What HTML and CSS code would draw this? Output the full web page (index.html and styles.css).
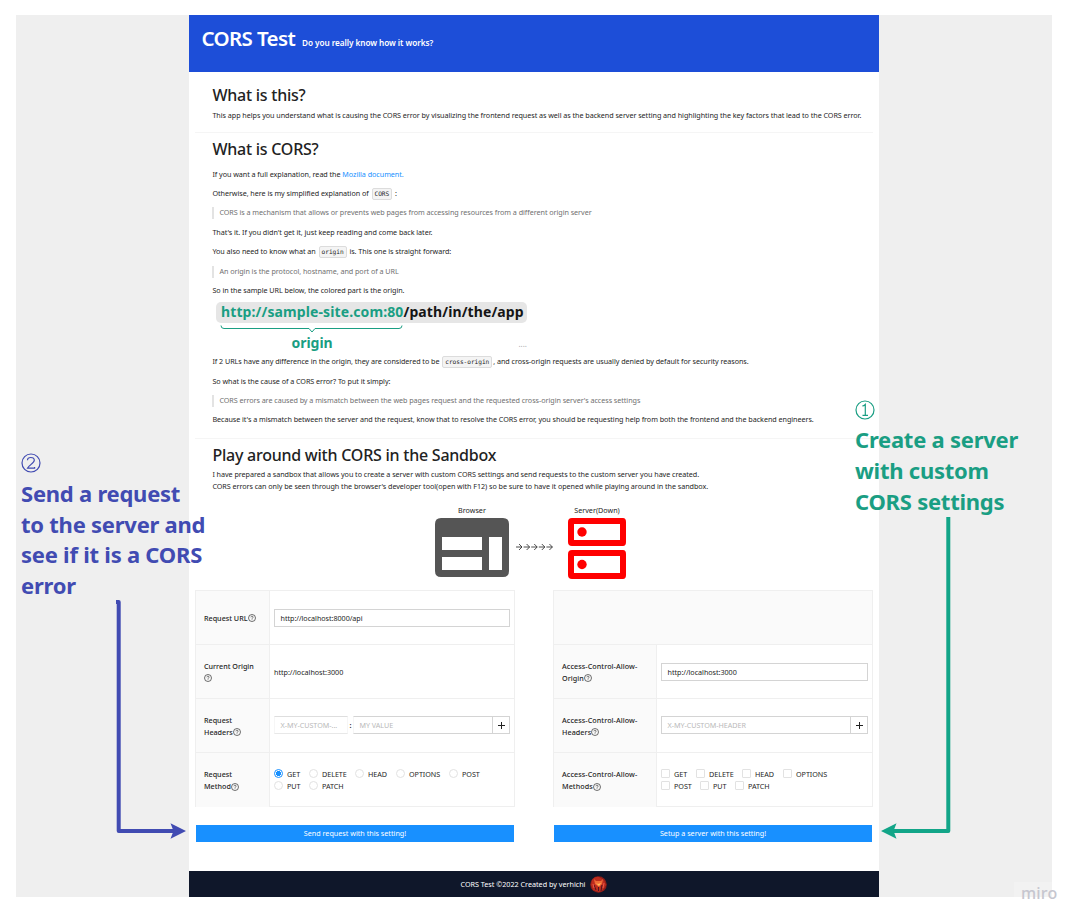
FILE: index.html
```html
<!DOCTYPE html>
<html lang="en">
<head>
<meta charset="utf-8">
<title>CORS Test</title>
<link rel="stylesheet" href="styles.css">
</head>
<body>
<svg class="defs" width="0" height="0"><symbol id="help" viewBox="0 0 8 8"><circle cx="4" cy="4" r="3.5" fill="none" stroke="#222" stroke-width=".65"/><path d="M2.9 3.3C2.9 1.9 5.1 1.9 5.1 3.2 5.1 4 4 4 4 4.8M4 5.4V6" fill="none" stroke="#222" stroke-width=".6"/></symbol></svg>
<div class="board">
  <div class="app">
    <header class="top"><h1>CORS Test</h1><span>Do you really know how it works?</span></header>
    <section class="about">
      <h2>What is this?</h2>
      <p>This app helps you understand what is causing the CORS error by visualizing the frontend request as well as the backend server setting and highlighting the key factors that lead to the CORS error.</p>
    </section>
    <section class="cors">
      <h2>What is CORS?</h2>
      <p>If you want a full explanation, read the <a>Mozilla document.</a></p>
      <p>Otherwise, here is my simplified explanation of <code>CORS</code> :</p>
      <blockquote>CORS is a mechanism that allows or prevents web pages from accessing resources from a different origin server</blockquote>
      <p>That's it. If you didn't get it, just keep reading and come back later.</p>
      <p>You also need to know what an <code>origin</code> is. This one is straight forward:</p>
      <blockquote>An origin is the protocol, hostname, and port of a URL</blockquote>
      <p>So in the sample URL below, the colored part is the origin.</p>
      <div class="sample">
        <div class="url"><b>http://sample-site.com:80</b>/path/in/the/app</div>
        <svg class="brace" width="184" height="9" viewBox="0 0 184 9"><path d="M1 .5Q1 3.5 4 3.5H89L92 7 95 3.5H179Q182 3.5 182 .5" fill="none" stroke="#1a9e83"/></svg>
        <div class="under"><span>origin</span><i>....</i></div>
      </div>
      <p>If 2 URLs have any difference in the origin, they are considered to be <code>cross-origin</code>, and cross-origin requests are usually denied by default for security reasons.</p>
      <p>So what is the cause of a CORS error? To put it simply:</p>
      <blockquote>CORS errors are caused by a mismatch between the web pages request and the requested cross-origin server's access settings</blockquote>
      <p>Because it's a mismatch between the server and the request, know that to resolve the CORS error, you should be requesting help from both the frontend and the backend engineers.</p>
    </section>
    <section class="play">
      <h2>Play around with CORS in the Sandbox</h2>
      <p>I have prepared a sandbox that allows you to create a server with custom CORS settings and send requests to the custom server you have created.</p>
      <p>CORS errors can only be seen through the browser's developer tool(open with F12) so be sure to have it opened while playing around in the sandbox.</p>
    </section>
    <div class="diagram">
      <div class="node"><span>Browser</span><svg width="74" height="60" viewBox="0 0 74 60"><path fill="#555" fill-rule="evenodd" d="M6 0H68Q74 0 74 6V53Q74 59 68 59H6Q0 59 0 53V6Q0 0 6 0ZM7 19V32H47V19ZM7 39V52H47V39ZM54 19V52H67V19Z"/></svg></div>
      <svg class="arrows" width="37" height="8" viewBox="0 0 37 8"><path d="M0 4H6M3 1 6 4 3 7M7.6 4h6m-3-3 3 3-3 3M15.2 4h6m-3-3 3 3-3 3M22.8 4h6m-3-3 3 3-3 3M30.4 4h6m-3-3 3 3-3 3" fill="none" stroke="#222" stroke-width=".8"/></svg>
      <div class="node"><span>Server(Down)</span><svg width="59" height="61" viewBox="0 0 59 61"><path fill="red" fill-rule="evenodd" d="M4 0H55Q58 0 58 4V24Q58 28 55 28H4Q0 28 0 24V4Q0 0 4 0ZM6 6V22H52V6ZM4 32H55Q58 32 58 36V57Q58 61 55 61H4Q0 61 0 57V36Q0 32 4 32ZM6 38V55H52V38Z"/><circle cx="14" cy="14" r="4.7" fill="red"/><circle cx="14" cy="46.5" r="4.7" fill="red"/></svg></div>
    </div>
    <div class="forms">
      <div class="panel left">
        <div class="table">
          <div class="row"><div class="label">Request URL<svg><use href="#help"/></svg></div><div class="cell"><div class="input">http://localhost:8000/api</div></div></div>
          <div class="row"><div class="label">Current Origin<br><svg><use href="#help"/></svg></div><div class="cell">http://localhost:3000</div></div>
          <div class="row"><div class="label">Request<br>Headers<svg><use href="#help"/></svg></div><div class="cell head"><div class="input ph key">X-MY-CUSTOM-...</div><b class="colon">:</b><div class="input ph value">MY VALUE</div><div class="plus"></div></div></div>
          <div class="row"><div class="label">Request<br>Method<svg><use href="#help"/></svg></div><div class="cell opts"><div><i class="on"></i><span style="width:26px">GET</span><i></i><span style="width:37px">DELETE</span><i></i><span style="width:32px">HEAD</span><i></i><span style="width:44px">OPTIONS</span><i></i><span>POST</span></div><div><i></i><span style="width:26px">PUT</span><i></i><span>PATCH</span></div></div></div>
        </div>
        <div class="button">Send request with this setting!</div>
      </div>
      <div class="panel right">
        <div class="table">
          <div class="row blank"></div>
          <div class="row"><div class="label">Access-Control-Allow-<br>Origin<svg><use href="#help"/></svg></div><div class="cell"><div class="input">http://localhost:3000</div></div></div>
          <div class="row"><div class="label">Access-Control-Allow-<br>Headers<svg><use href="#help"/></svg></div><div class="cell head"><div class="input ph">X-MY-CUSTOM-HEADER</div><div class="plus"></div></div></div>
          <div class="row"><div class="label">Access-Control-Allow-<br>Methods<svg><use href="#help"/></svg></div><div class="cell opts square"><div><i></i><span style="width:26px">GET</span><i></i><span style="width:37px">DELETE</span><i></i><span style="width:32px">HEAD</span><i></i><span>OPTIONS</span></div><div><i></i><span style="width:30px">POST</span><i></i><span style="width:26px">PUT</span><i></i><span>PATCH</span></div></div></div>
        </div>
        <div class="button">Setup a server with this setting!</div>
      </div>
    </div>
    <footer><span>CORS Test ©2022 Created by verhichi</span><svg width="17" height="17" viewBox="0 0 17 17"><circle cx="8.5" cy="8.5" r="8.3" fill="#8d1d18"/><path d="M2 4Q5 0 9 1L14 4 16 9 13 14 9 16 3 14 1 9Z" fill="#bd2c1e"/><path d="M4 3 6 5H11L13 3 12 8 9 11 5 8Z" fill="#ef6b35"/><path d="M6 7 8 8 11 7 9 10Z" fill="#ffc05a"/><path d="M4 9 6 14M12 9 11 15M8.5 11V15" stroke="#4c1520"/><path d="M3 8 4 12M14 7 13 12" stroke="#e85a4a"/></svg></footer>
  </div>
</div>
<div class="note send"><svg width="20" height="20" viewBox="0 0 20 20"><circle cx="10" cy="10" r="9"/><path d="M6.5 7.2Q6.5 4.5 9.8 4.5 13.3 4.5 13.3 7.3C13.3 10 8 12 6.5 15.2H13.6V14"/></svg><div>Send a request<br>to the server and<br>see if it is a CORS<br>error</div></div>
<div class="note create"><svg width="20" height="20" viewBox="0 0 20 20"><circle cx="10" cy="10" r="9"/><path d="M7.3 6Q9 5.8 10.3 4.5V15.2M7.5 15.3H13"/></svg><div>Create a server<br>with custom<br>CORS settings</div></div>
<svg class="links" width="1081" height="924" viewBox="0 0 1081 924"><path d="M116 602H118.7V831H174" fill="none" stroke="#414bb2" stroke-width="4" stroke-linejoin="round"/><path d="M186 831 170.5 823.2 173.5 831 170.5 838.8Z" fill="#414bb2"/><path d="M948.3 517V831H893" fill="none" stroke="#12a588" stroke-width="4" stroke-linejoin="round"/><path d="M881 831 896.5 823.2 893.5 831 896.5 838.8Z" fill="#12a588"/></svg>
<div class="miro">miro</div>
</body>
</html>
```
FILE: styles.css
```css
* { box-sizing: border-box; margin: 0; padding: 0; }
body { width: 1081px; height: 924px; padding: 15px 0 0 16px; background: #fff; overflow: hidden; position: relative; font-family: "Noto Sans", sans-serif; font-size: 7.2px; color: #252525; }
.defs { position: absolute; }
.board { width: 1036px; height: 882px; background: #efefef; padding-left: 173px; }
.app { width: 690px; height: 882px; background: #fff; display: flex; flex-direction: column; }
.top { height: 57px; background: #1d4ed8; color: #fff; display: flex; align-items: baseline; gap: 7px; padding: 9px 12.5px 0; }
.top h1 { font-size: 20.5px; line-height: 28px; font-weight: 600; letter-spacing: -.63px; }
.top span { font-size: 8.2px; font-weight: 600; letter-spacing: -.06px; }
h2 { font-size: 16px; font-weight: 500; line-height: 20px; color: #222; letter-spacing: -.24px; }
section { margin-left: 6px; width: 678px; padding: 0 0 0 17.4px; border-bottom: 1px solid #f5f5f5; white-space: nowrap; }
p, blockquote { letter-spacing: -.044px; }
.about { height: 61px; padding-top: 13px; }
.about p { line-height: 20px; }
.cors { height: 306px; padding-top: 6px; }
.cors h2 { margin: 0 0 5.6px; }
.cors p, .cors blockquote { height: 19.4px; line-height: 19.4px; }
blockquote { color: #707070; position: relative; padding-left: 7px; }
blockquote::before { content: ""; position: absolute; left: 0; top: 4px; width: 2px; height: 12px; background: #e3e3e3; }
a { color: #1890ff; }
code { font: 6.2px/8px "DejaVu Sans Mono", monospace; border: 1px solid #dcdcdc; background: #f4f4f4; border-radius: 2px; padding: 1px 2px; margin: 0 1px; display: inline-block; letter-spacing: -.06px; }
.sample { height: 51.8px; padding: 1.4px 0 0 4px; color: #1a9e83; }
.url { width: 311px; height: 21px; border-radius: 5px; background: #e6e6e6; color: #151515; font: 700 14px/20px "Noto Sans", sans-serif; letter-spacing: .11px; padding-left: 4.6px; }
.url b { color: #1a9e83; font-weight: 700; }
.brace { display: block; margin: 2px 0 0 4px; }
.under { display: flex; height: 18px; padding-left: 75px; font: 700 14px/18px "Noto Sans", sans-serif; }
.under span { width: 227px; }
.under i { font: 8px/20px "Noto Sans", sans-serif; color: #aaa; }
.play { height: 63px; padding-top: 6px; border: 0; }
.play h2 { margin-bottom: 3px; }
.play p { line-height: 12px; }
.diagram { height: 88px; padding-left: 246px; display: flex; align-items: flex-start; }
.node { display: flex; flex-direction: column; align-items: center; padding-top: 2px; }
.node span { line-height: 12px; height: 14px; }
.arrows { margin: 41px 15px 0 6.5px; }
.forms { display: flex; height: 281px; padding: 0 6px; justify-content: space-between; }
.panel { width: 320px; }
.table { border: 1px solid #efefef; height: 217px; }
.row { height: 54px; display: flex; border-bottom: 1px solid #efefef; }
.row:last-child { border: 0; }
.blank { background: #fafafa; }
.label { width: 74px; background: #fafafa; border-right: 1px solid #efefef; padding-left: 8px; display: flow-root; align-content: center; line-height: 12px; font-weight: 500; white-space: nowrap; }
.right .label { width: 103px; letter-spacing: .07px; }
.label svg { width: 8px; height: 8px; vertical-align: -1.5px; }
.cell { flex: 1; padding: 0 4px; display: flex; align-items: center; letter-spacing: -.04px; }
.input { flex: 1; height: 18px; border: 1px solid #d4d4d4; padding-left: 5.5px; line-height: 16px; white-space: nowrap; }
.ph { color: #b9b9b9; }
.key { flex: 0 0 74px; border-color: #dedede #f6f6f6 #e8e8e8; }
.value { border-left-color: #f6f6f6; }
.head { padding-bottom: 1px; }
.colon { width: 5px; text-align: center; }
.plus { width: 18px; height: 18px; border: 1px solid #d4d4d4; margin-left: -1px; background: linear-gradient(#222,#222) center/7px 1px no-repeat, linear-gradient(#222,#222) center/1px 7px no-repeat; }
.opts { flex-direction: column; align-items: flex-start; justify-content: center; padding-bottom: 1px; }
.opts div { height: 12px; display: flex; align-items: center; }
.opts i { width: 9px; height: 9px; border: 1px solid #e2e2e2; border-radius: 50%; margin-right: 4px; flex: none; }
.opts span { margin-right: -4px; flex: none; }
.opts .on { border-color: #1890ff; background: radial-gradient(#1890ff 0 2.3px, #fff 2.8px); }
.square i { border-radius: 1px; }
.button { margin: 18px 1px 0; height: 17px; background: #1890ff; color: #fff; text-align: center; line-height: 17px; }
footer { height: 26px; background: #0f172a; color: #fff; display: flex; align-items: center; justify-content: center; gap: 5px; }
.note { position: absolute; font: 700 22px/30.6px "Noto Sans", sans-serif; letter-spacing: -.24px; white-space: nowrap; }
.note svg { display: block; fill: none; stroke: currentColor; stroke-width: 1.2; margin-bottom: 5px; }
.send { left: 21px; top: 453px; color: #414bb2; }
.create { left: 855px; top: 400px; color: #1a9e83; }
.create div { margin-top: -.6px; }
.links { position: absolute; left: 0; top: 0; }
.miro { position: absolute; left: 1014px; top: 882px; width: 50px; height: 22px; padding-left: 7px; font: 500 16px/22px "Noto Sans", sans-serif; letter-spacing: .2px; color: #c6c6cf; background: rgba(255,255,255,.2); }
```
